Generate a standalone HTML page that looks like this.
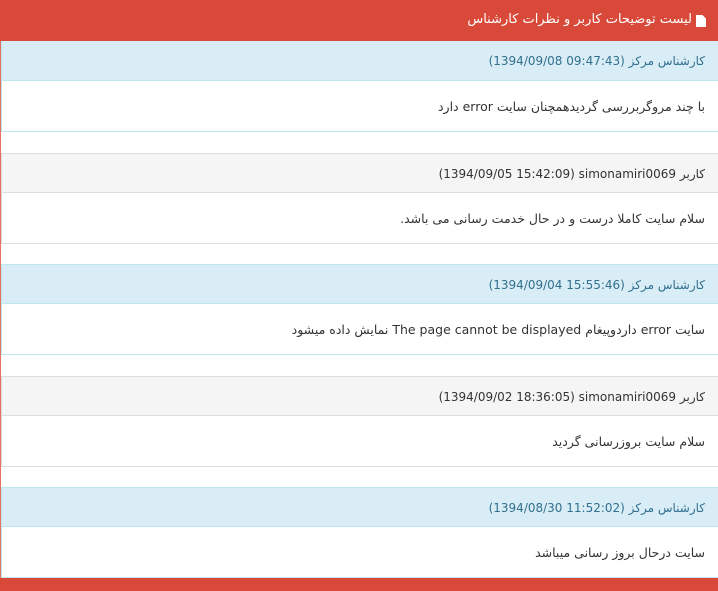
<!DOCTYPE html>
<html><head><meta charset="utf-8"><style>
*{margin:0;padding:0;box-sizing:border-box}
body{width:718px;height:591px;overflow:hidden;background:#fff;font-family:"DejaVu Sans","Liberation Sans",sans-serif;font-size:12px;color:#333;position:relative}
.lb{position:absolute;left:0;top:0;width:1px;height:591px;background:#e8705f}
.hd{position:absolute;left:0;top:0;width:718px;height:41px;background:#d9493a;color:#fff;font-size:13px}
.hd span{position:absolute;right:26px;top:12px;direction:rtl}
.ic{position:absolute;right:12px;top:15px;width:10px;height:12px;background:#fff;clip-path:polygon(0 0,65% 0,100% 30%,100% 100%,0 100%)}
.p{position:absolute;left:1px;width:717px}
.h{position:absolute;left:0;right:0;top:0;height:40px;border-bottom:1px solid;direction:rtl;text-align:right;padding:13px 13px 0 0}
.b{position:absolute;left:0;right:0;top:40px;height:51px;border-bottom:1px solid;border-left:1px solid;direction:rtl;text-align:right;padding:18px 13px 0 0;font-size:12.5px}
.i .h{background:#d9edf7;color:#31708f;border-color:#bce8f1;border-left:1px solid #bce8f1;border-top:1px solid #bce8f1}
.i .b{border-color:#bce8f1}
.d .h{background:#f5f5f5;color:#333;border-color:#ddd;border-left:1px solid #ddd;border-top:1px solid #ddd}
.d .b{border-color:#ddd}
.ft{position:absolute;left:0;top:578px;width:718px;height:13px;background:#d9493a}
</style></head><body>
<div class="lb"></div>
<div class="hd"><div class="ic"></div><span>لیست توضیحات کاربر و نظرات کارشناس</span></div>
<div class="p i" style="top:41px"><div class="h" style="border-top:0">کارشناس مرکز <bdi dir="ltr">(1394/09/08 09:47:43)</bdi></div><div class="b">با چند مروگربررسی گردیدهمچنان سایت error دارد</div></div>
<div class="p d" style="top:153px"><div class="h">کاربر <bdi dir="ltr">simonamiri0069</bdi> <bdi dir="ltr">(1394/09/05 15:42:09)</bdi></div><div class="b">سلام سایت کاملا درست و در حال خدمت رسانی می باشد.</div></div>
<div class="p i" style="top:264px"><div class="h">کارشناس مرکز <bdi dir="ltr">(1394/09/04 15:55:46)</bdi></div><div class="b">سایت error داردوپیغام The page cannot be displayed نمایش داده میشود</div></div>
<div class="p d" style="top:376px"><div class="h">کاربر <bdi dir="ltr">simonamiri0069</bdi> <bdi dir="ltr">(1394/09/02 18:36:05)</bdi></div><div class="b">سلام سایت بروزرسانی گردید</div></div>
<div class="p i" style="top:487px"><div class="h">کارشناس مرکز <bdi dir="ltr">(1394/08/30 11:52:02)</bdi></div><div class="b">سایت درحال بروز رسانی میباشد</div></div>
<div class="ft"></div>
</body></html>
